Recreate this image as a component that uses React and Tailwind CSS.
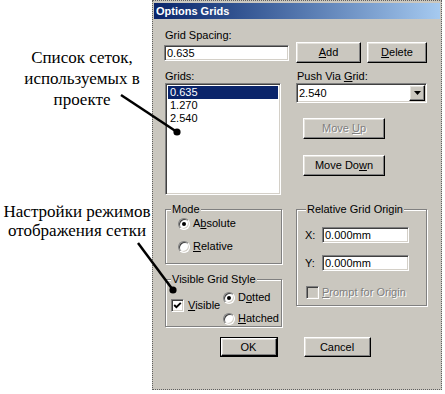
import React from "react";

const face = "bg-[#cac7bf]";
const raised =
  "flex items-center justify-center bg-[#cac7bf] border border-t-white border-l-white border-r-black border-b-black shadow-[inset_-1px_-1px_0_#808080,inset_1px_1px_0_#e4e2dc]";
const sunken =
  "border border-t-[#808080] border-l-[#808080] border-r-white border-b-white shadow-[inset_1px_1px_0_#404040,inset_-1px_-1px_0_#d4d0c8]";
const groupBox =
  "border border-[#808080] shadow-[1px_1px_0_#fff,inset_1px_1px_0_#fff] min-w-0";
const disabledText = "text-[#808080] [text-shadow:1px_1px_0_#fff]";

function Radio({ checked }) {
  return (
    <span className={`flex items-center justify-center w-[12px] h-[12px] rounded-full bg-white ${sunken}`}>
      {checked && <span className="w-[4px] h-[4px] rounded-full bg-black" />}
    </span>
  );
}

function Checkbox({ checked, disabled }) {
  return (
    <span className={`flex items-center justify-center w-[13px] h-[13px] ${disabled ? face : "bg-white"} ${sunken}`}>
      {checked && (
        <svg width="9" height="9" viewBox="0 0 9 9">
          <path d="M1.2 4 L3.4 6.2 L7.8 1.8" fill="none" stroke="black" strokeWidth="1.9" />
        </svg>
      )}
    </span>
  );
}

function Legend({ children, className = "" }) {
  return (
    <legend className={`px-[1px] leading-[12px] h-[12px] ${face} ${className}`}>{children}</legend>
  );
}

export default function App() {
  return (
    <div className="relative w-[445px] h-[394px] bg-white overflow-hidden flex">
      {/* Annotations */}
      <div className="w-[152px] shrink-0 font-['Liberation_Serif','DejaVu_Serif',serif] text-[17px] text-black">
        <div className="w-[150px] ml-[7px] pt-[47px] text-center leading-[21px] whitespace-nowrap">
          <div>Список сеток,</div>
          <div>используемых в</div>
          <div>проекте</div>
        </div>
        <div className="w-[152px] ml-[1px] mt-[92px] text-center leading-[19px] whitespace-nowrap">
          <div>Настройки режимов</div>
          <div>отображения сетки</div>
        </div>
      </div>

      {/* Dialog */}
      <div className={`relative w-[290px] h-[390px] shrink-0 ${face} border border-dotted border-[#606060] pt-[2px] px-[1px] font-['Liberation_Sans',Arial,sans-serif] text-[11px] text-black`}>
        <div className="h-[16px] flex items-center pl-[2px] bg-linear-to-r from-[#0a246a] to-[#a6caf0] text-white font-bold text-[11px]">
          Options Grids
        </div>

        <div className="pl-[10px]">
          {/* Row 1 */}
          <div className="flex mt-[10px]">
            <div className="w-[125px]">
              <div className="h-[13px] leading-[13px] pl-[1px]">Grid Spacing:</div>
              <div className={`mt-[3px] h-[16px] bg-white ${sunken} flex items-center pl-[2px]`}>0.635</div>
            </div>
            <div className="ml-[7px] mt-[13px] flex gap-[6px]">
              <div className={`${raised} w-[65px] h-[21px]`}><span><u>A</u>dd</span></div>
              <div className={`${raised} w-[60px] h-[21px]`}><span><u>D</u>elete</span></div>
            </div>
          </div>

          {/* Row 2 */}
          <div className="flex">
            <div className="w-[118px]">
              <div className="mt-[7px] h-[13px] leading-[13px] pl-[1px]">Grids:</div>
              <div className={`ml-[1px] w-[116px] h-[112px] bg-white ${sunken} p-[2px]`}>
                <div className="h-[13px] leading-[13px] pl-[2px] bg-[#0a246a] text-white">0.635</div>
                <div className="h-[13px] leading-[13px] pl-[2px]">1.270</div>
                <div className="h-[13px] leading-[13px] pl-[2px]">2.540</div>
              </div>

              <fieldset className={`mt-[8px] ml-[1px] w-[117px] h-[61px] ${groupBox}`}>
                <Legend className="ml-[5px]">Mode</Legend>
                <div className="pl-[12px]">
                  <div className="mt-[2px] h-[13px] flex items-center gap-[3px]">
                    <Radio checked />
                    <span>A<u>b</u>solute</span>
                  </div>
                  <div className="mt-[10px] h-[13px] flex items-center gap-[3px]">
                    <Radio />
                    <span><u>R</u>elative</span>
                  </div>
                </div>
              </fieldset>

              <fieldset className={`mt-[9px] ml-[1px] w-[117px] h-[54px] ${groupBox}`}>
                <Legend className="ml-[5px]">Visible Grid Style</Legend>
                <div className="flex items-center pl-[5px]">
                  <div className="w-[52px] flex items-center gap-[4px]">
                    <Checkbox checked />
                    <span><u>V</u>isible</span>
                  </div>
                  <div className="flex flex-col">
                    <div className="mt-[6px] h-[13px] flex items-center gap-[3px]">
                      <Radio checked />
                      <span>D<u>o</u>tted</span>
                    </div>
                    <div className="mt-[8px] h-[13px] flex items-center gap-[3px]">
                      <Radio />
                      <span><u>H</u>atched</span>
                    </div>
                  </div>
                </div>
              </fieldset>
            </div>

            <div className="ml-[14px] w-[131px]">
              <div className="mt-[7px] h-[13px] leading-[13px] pl-[1px]">Push Via <u>G</u>rid:</div>
              <div className={`h-[20px] bg-white ${sunken} flex items-center justify-between pl-[2px] pr-[1px]`}>
                <span>2.540</span>
                <div className={`${raised} w-[16px] h-[16px]`}>
                  <svg width="7" height="4" viewBox="0 0 7 4">
                    <polygon points="0,0 7,0 3.5,4" fill="black" />
                  </svg>
                </div>
              </div>
              <div className={`${raised} mt-[15px] ml-[7px] w-[82px] h-[21px] ${disabledText}`}>
                <span>Move <u>U</u>p</span>
              </div>
              <div className={`${raised} mt-[16px] ml-[7px] w-[82px] h-[21px]`}>
                <span>Move Do<u>w</u>n</span>
              </div>

              <fieldset className={`mt-[27px] w-[131px] h-[103px] ${groupBox}`}>
                <Legend className="ml-[9px]">Relative Grid Origin</Legend>
                <div className="pl-[8px]">
                  <div className="mt-[12px] flex items-center">
                    <span className="w-[17px]">X:</span>
                    <div className={`w-[87px] h-[16px] bg-white ${sunken} flex items-center pl-[2px]`}>0.000mm</div>
                  </div>
                  <div className="mt-[11px] flex items-center">
                    <span className="w-[17px]">Y:</span>
                    <div className={`w-[87px] h-[16px] bg-white ${sunken} flex items-center pl-[2px]`}>0.000mm</div>
                  </div>
                  <div className="mt-[13px] ml-[1px] flex items-center gap-[3px]">
                    <Checkbox disabled />
                    <span className={disabledText}><u>P</u>rompt for Origin</span>
                  </div>
                </div>
              </fieldset>
            </div>
          </div>
        </div>

        {/* OK / Cancel */}
        <div className="mt-[10px] flex justify-center gap-[26px] pr-[4px]">
          <div className="border border-black w-[58px] h-[20px]">
            <div className={`${raised} w-full h-full`}>OK</div>
          </div>
          <div className={`${raised} w-[67px] h-[20px]`}>Cancel</div>
        </div>
      </div>

      {/* Pointer lines */}
      <svg className="absolute inset-0 pointer-events-none" width="445" height="394" viewBox="0 0 445 394">
        <line x1="121" y1="95" x2="177" y2="132" stroke="black" strokeWidth="2.5" />
        <circle cx="177" cy="132" r="3.6" fill="black" />
        <line x1="138" y1="243" x2="173" y2="290" stroke="black" strokeWidth="2.5" />
        <circle cx="173" cy="290" r="3.6" fill="black" />
      </svg>
    </div>
  );
}
